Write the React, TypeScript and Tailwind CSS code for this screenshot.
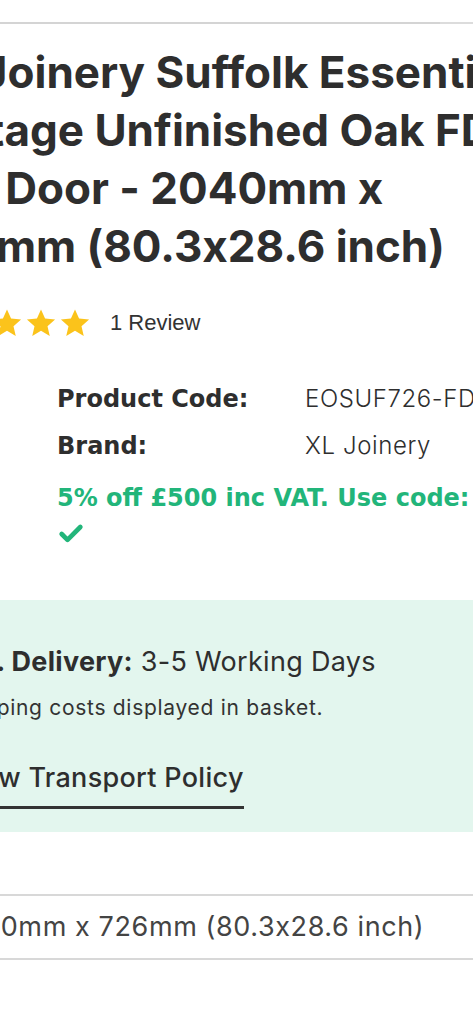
import { Check } from 'lucide-react';

const font = { fontFamily: 'Inter, "Noto Sans", sans-serif', fontFeatureSettings: '"calt" 0' };
const wide = { fontFamily: '"DejaVu Sans", Inter, sans-serif' };

function Star() {
  return (
    <svg viewBox="0 0 24 24" className="w-[32px] h-[32px] shrink-0" fill="#fbc31b">
      <path d="M12 1.8l3.05 6.9 7.5.7-5.67 5 1.68 7.37L12 17.9l-6.56 3.87 1.68-7.37-5.67-5 7.5-.7z" />
    </svg>
  );
}

export default function App() {
  return (
    <div className="w-[473px] h-[1024px] overflow-hidden bg-white text-[#2e2e2e]" style={font}>
      <div className="pt-[22px]">
        <div className="flex">
          <div className="h-[2px] w-[440px] bg-[#d4d4d4]" />
          <div className="h-[2px] flex-1 bg-[#dcdcdc]" />
        </div>
      </div>

      {/* title, page is cropped at both sides */}
      <h1 className="mt-[19px] -ml-[86px] whitespace-nowrap text-[44px] font-bold leading-[58px]">
        <div>XL Joinery Suffolk Essential</div>
        <div>Cottage Unfinished Oak FD30</div>
        <div>Fire Door - 2040mm x</div>
        <div>726mm (80.3x28.6 inch)</div>
      </h1>

      <div className="mt-[31px] -ml-[9px] flex items-center gap-[2px]">
        <Star />
        <Star />
        <Star />
        <span className="ml-[17px] text-[22px] text-[#333]" style={{ fontFamily: '"Liberation Sans", Arial, sans-serif' }}>
          1 Review
        </span>
      </div>

      <div className="mt-[44px] pl-[57px]">
        <div className="grid grid-cols-[248px_1fr] gap-y-[15px] leading-[32px] whitespace-nowrap">
          <span className="font-bold text-[24px]" style={wide}>Product Code:</span>
          <span className="font-light text-[24px] tracking-[0.6px]">EOSUF726-FD30</span>
          <span className="font-bold text-[24px]" style={wide}>Brand:</span>
          <span className="font-light text-[24px] tracking-[0.6px]">XL Joinery</span>
        </div>
        <div className="mt-[20px] text-[24px] leading-[32px] font-bold text-[#22b57a] whitespace-nowrap" style={wide}>
          5% off £500 inc VAT. Use code: SAVE5
        </div>
        <Check className="mt-[6px] w-[28px] h-[28px] text-[#22b57a]" strokeWidth={4} />
      </div>

      <div className="mt-[52px] h-[232px] bg-[#e3f6ee] pt-[44px]">
        <div className="-ml-[46px] text-[27px] leading-[36px] tracking-[0.3px] whitespace-nowrap">
          <span className="font-bold">Est. Delivery:</span> 3-5 Working Days
        </div>
        <div className="mt-[14px] -ml-[50px] text-[21px] leading-[28px] tracking-[0.7px] text-[#333] whitespace-nowrap">
          Shipping costs displayed in basket.
        </div>
        <div className="mt-[38px] -ml-[44px] inline-block border-b-[3px] border-[#333] pb-[10px] text-[27px] leading-[36px] tracking-[0.3px] font-medium whitespace-nowrap">
          View Transport Policy
        </div>
      </div>

      <div className="mt-[62px] border-y-2 border-[#d8d8d8] h-[66px] flex items-center -ml-[52px]">
        <span className="text-[27px] tracking-[0.6px] text-[#444] whitespace-nowrap">2040mm x 726mm (80.3x28.6 inch)</span>
      </div>
    </div>
  );
}
